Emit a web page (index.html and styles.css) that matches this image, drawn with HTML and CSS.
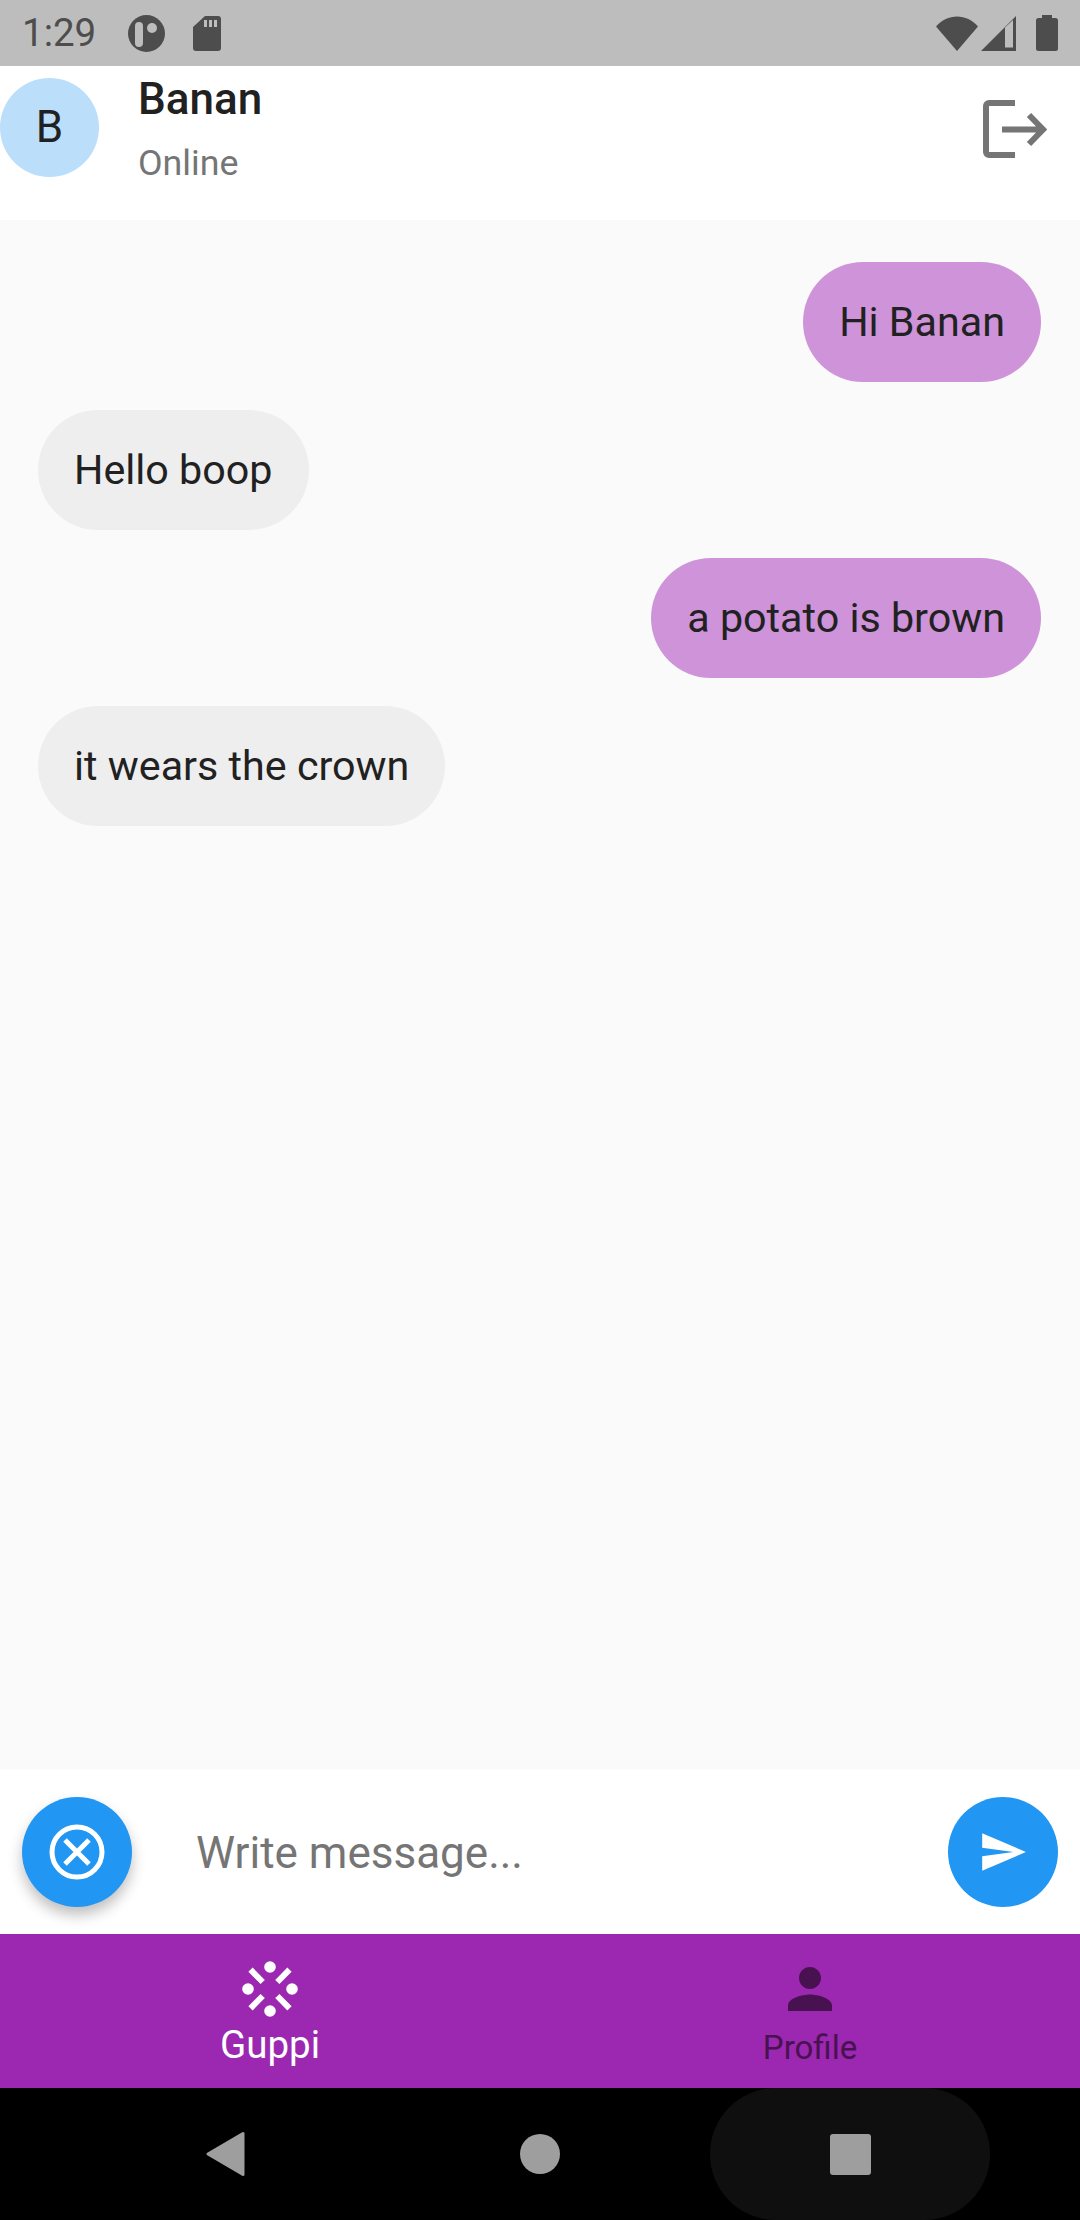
FILE: index.html
```html
<!DOCTYPE html>
<html lang="en">
<head>
    <meta charset="UTF-8">
    <meta name="viewport" content="width=device-width, initial-scale=1.0">
    <title>Guppi</title>
    <link rel="stylesheet" href="styles.css">
</head>
<body>
    <!-- Status bar -->
    <div class="status-bar">
        <span class="status-time">1:29</span>
        <svg class="status-app" width="37" height="37" viewBox="0 0 37 37">
            <circle cx="18.5" cy="18.5" r="18.5" fill="#4d4d4d"/>
            <rect x="7" y="7" width="8" height="25" rx="4" fill="#bdbdbd"/>
            <circle cx="24" cy="13" r="5" fill="#bdbdbd"/>
        </svg>
        <svg class="status-sd" width="28" height="35" viewBox="0 0 28 35">
            <path d="M12 0H25a3 3 0 0 1 3 3V32a3 3 0 0 1-3 3H3a3 3 0 0 1-3-3V11z" fill="#4d4d4d"/>
            <rect x="11" y="4" width="3" height="7" fill="#bdbdbd"/>
            <rect x="16" y="4" width="3" height="7" fill="#bdbdbd"/>
            <rect x="21" y="4" width="3" height="7" fill="#bdbdbd"/>
        </svg>
        <div class="status-right">
            <svg width="42" height="35" viewBox="0 0 42 35">
                <path d="M0 10.5C11-3 31-3 42 10.5L21 35z" fill="#4d4d4d"/>
            </svg>
            <svg class="status-signal" width="35" height="35" viewBox="0 0 35 35">
                <path d="M0 35L35 0V35z" fill="#4d4d4d"/>
                <path d="M24 11.5V31.500H32V4z" fill="#bdbdbd"/>
            </svg>
            <svg class="status-battery" width="22" height="36" viewBox="0 0 22 36">
                <path d="M6 3V0H16V3H19.500a2.500 2.500 0 0 1 2.500 2.500V33.500a2.500 2.500 0 0 1-2.500 2.500H2.500a2.500 2.500 0 0 1-2.500-2.500V5.500A2.500 2.500 0 0 1 2.500 3z" fill="#4d4d4d"/>
            </svg>
        </div>
    </div>

    <!-- App bar -->
    <div class="app-bar">
        <div class="avatar">B</div>
        <div class="contact">
            <div class="contact-name">Banan</div>
            <div class="contact-state">Online</div>
        </div>
        <svg class="logout" width="64" height="58" viewBox="0 0 64 58">
            <path d="M32 3H6a3 3 0 0 0-3 3V52a3 3 0 0 0 3 3H32" fill="none" stroke="#757575" stroke-width="6"/>
            <path d="M19 29.500H58M46 15L60 29.500 46 44" fill="none" stroke="#757575" stroke-width="6"/>
        </svg>
    </div>

    <!-- Messages -->
    <div class="messages">
        <div class="bubble bubble-me">Hi Banan</div>
        <div class="bubble bubble-them">Hello boop</div>
        <div class="bubble bubble-me">a potato is brown</div>
        <div class="bubble bubble-them">it wears the crown</div>
    </div>

    <!-- Input -->
    <div class="composer">
        <div class="round-btn round-btn-raised">
            <svg width="56" height="56" viewBox="0 0 56 56">
                <circle cx="28" cy="28" r="25" fill="none" stroke="#fff" stroke-width="5"/>
                <path d="M16 16L40 40M40 16L16 40" fill="none" stroke="#fff" stroke-width="5"/>
            </svg>
        </div>
        <div class="composer-hint">Write message...</div>
        <div class="round-btn">
            <svg width="50" height="50" viewBox="0 0 24 24">
                <path d="M2.010 21L23 12 2.010 3 2 10l15 2-15 2z" fill="#fff"/>
            </svg>
        </div>
    </div>

    <!-- Bottom tabs -->
    <div class="tabs">
        <div class="tab tab-active">
            <svg class="tab-icon" width="66" height="66" viewBox="0 0 66 66">
                <circle cx="33" cy="11" r="5.800" fill="#fff"/>
                <circle cx="33" cy="55" r="5.800" fill="#fff"/>
                <circle cx="11" cy="33" r="5.800" fill="#fff"/>
                <circle cx="55" cy="33" r="5.800" fill="#fff"/>
                <path d="M13.500 13.700L25.700 26M52.500 13.700L40.300 26M13.500 52.300L25.700 40M52.500 52.300L40.300 40" fill="none" stroke="#fff" stroke-width="6"/>
            </svg>
            <span class="tab-label">Guppi</span>
        </div>
        <div class="tab">
            <svg class="tab-icon" width="66" height="66" viewBox="0 0 24 24">
                <path d="M12 12c2.210 0 4-1.790 4-4s-1.790-4-4-4-4 1.790-4 4 1.790 4 4 4zm0 2c-2.670 0-8 1.340-8 4v2h16v-2c0-2.660-5.330-4-8-4z" fill="#481251"/>
            </svg>
            <span class="tab-label">Profile</span>
        </div>
    </div>

    <!-- Android nav bar -->
    <div class="nav-bar">
        <div class="nav-key">
            <svg width="40" height="46" viewBox="0 0 40 46">
                <path d="M2 23L37 2.500V43.500z" fill="#9e9e9e" stroke="#9e9e9e" stroke-width="3" stroke-linejoin="round"/>
            </svg>
        </div>
        <div class="nav-key">
            <div class="nav-home"></div>
        </div>
        <div class="nav-key nav-key-pressed">
            <div class="nav-recents"></div>
        </div>
    </div>
</body>
</html>
```

FILE: styles.css
```css
* {
    box-sizing: border-box;
}

body {
    margin: 0;
    width: 1080px;
    height: 2220px;
    display: flex;
    flex-direction: column;
    font-family: Roboto, "Liberation Sans", sans-serif;
    color: #212121;
    overflow: hidden;
}

/* Status bar */
.status-bar {
    height: 66px;
    flex: none;
    background: #bdbdbd;
    display: flex;
    align-items: center;
    padding: 0 22px 0 22px;
    color: #4d4d4d;
}
.status-time {
    font-size: 38.5px;
    line-height: 66px;
    width: 106px;
}
.status-sd {
    margin-left: 28px;
}
.status-right {
    margin-left: auto;
    display: flex;
    align-items: center;
}
.status-signal {
    margin-left: 3px;
}
.status-battery {
    margin-left: 20px;
}

/* App bar */
.app-bar {
    height: 154px;
    flex: none;
    background: #fff;
    display: flex;
    align-items: flex-start;
    padding-right: 33px;
}
.avatar {
    width: 99px;
    height: 99px;
    margin-top: 12px;
    border-radius: 50%;
    background: #bbdefb;
    font-size: 44px;
    line-height: 99px;
    text-align: center;
}
.contact {
    margin-left: 39px;
    padding-top: 7px;
}
.contact-name {
    font-size: 44px;
    font-weight: 500;
    line-height: 52px;
}
.contact-state {
    margin-top: 16px;
    font-size: 35.750px;
    line-height: 44px;
    color: #757575;
}
.logout {
    margin-left: auto;
    margin-top: 34px;
}

/* Messages */
.messages {
    flex: 1;
    background: #fafafa;
    padding: 42px 39px 0 38px;
    display: flex;
    flex-direction: column;
    align-items: flex-start;
    gap: 28px;
}
.bubble {
    height: 120px;
    padding: 0 36px;
    border-radius: 60px;
    font-size: 41.250px;
    line-height: 120px;
}
.bubble-me {
    align-self: flex-end;
    background: #ce93d8;
}
.bubble-them {
    background: #eeeeee;
}

/* Input */
.composer {
    height: 165px;
    flex: none;
    background: #fff;
    display: flex;
    align-items: center;
    padding: 0 22px;
}
.round-btn {
    width: 110px;
    height: 110px;
    flex: none;
    border-radius: 50%;
    background: #2196f3;
    display: flex;
    align-items: center;
    justify-content: center;
}
.round-btn-raised {
    box-shadow: 0 8px 14px rgba(0,0,0,0.25);
}
.composer-hint {
    flex: 1;
    margin-left: 64px;
    padding-top: 2px;
    font-size: 44px;
    color: #757575;
}

/* Bottom tabs */
.tabs {
    height: 154px;
    flex: none;
    background: #9c27b0;
    display: flex;
}
.tab {
    flex: 1;
    display: flex;
    flex-direction: column;
    align-items: center;
    padding-top: 22px;
    color: #481251;
    font-size: 33px;
    line-height: 40px;
}
.tab-icon {
    display: block;
    height: 66px;
}
.tab-label {
    margin-top: 6px;
}
.tab-active {
    color: #fff;
    font-size: 38.5px;
    line-height: 44px;
}
.tab-active .tab-label {
    margin-top: 1px;
}

/* Android nav bar */
.nav-bar {
    height: 132px;
    flex: none;
    background: #000;
    display: grid;
    grid-template-columns: 288px 340px 280px;
    padding-left: 82px;
}
.nav-key {
    display: flex;
    align-items: center;
    justify-content: center;
}
.nav-key-pressed {
    background: #0f0f0f;
    border-radius: 70px;
}
.nav-home {
    width: 40px;
    height: 40px;
    border-radius: 50%;
    background: #9e9e9e;
}
.nav-recents {
    width: 41px;
    height: 41px;
    border-radius: 3px;
    background: #9e9e9e;
}
```
